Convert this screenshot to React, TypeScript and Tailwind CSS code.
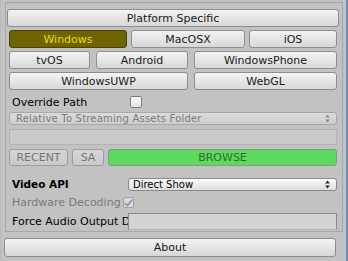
import React from "react";

// Unity-style inspector panel (light skin)
const btn =
  "flex items-center justify-center shrink-0 rounded-[3px] border border-[#8e8e8e] bg-gradient-to-b from-[#f3f3f3] to-[#d8d8d8] text-[11px] leading-none text-[#1a1a1a]";

function PopupArrows({ color }: { color: string }) {
  return (
    <svg width="5" height="9" viewBox="0 0 5 9" className="shrink-0">
      <path d="M2.5 0.5 L4.8 3.5 L0.2 3.5 Z" fill={color} />
      <path d="M2.5 8.5 L4.8 5.5 L0.2 5.5 Z" fill={color} />
    </svg>
  );
}

function PlatformRow({
  items,
  gap,
  top,
}: {
  items: { label: string; w: number; active?: boolean }[];
  gap: string;
  top: string;
}) {
  return (
    <div className={`ml-[3px] flex ${gap} ${top}`}>
      {items.map((it) =>
        it.active ? (
          <div
            key={it.label}
            style={{ width: it.w }}
            className="flex h-[18px] shrink-0 items-center justify-center rounded-[3px] border border-[#4a4400] bg-[#6d6300] text-[11px] leading-none text-[#eadc00]"
          >
            {it.label}
          </div>
        ) : (
          <div key={it.label} style={{ width: it.w }} className={`${btn} h-[18px]`}>
            {it.label}
          </div>
        ),
      )}
    </div>
  );
}

export default function App() {
  return (
    <div className="flex h-[261px] w-[348px] bg-[#c2c2c2] font-['DejaVu_Sans',sans-serif]">
      <div className="w-[1px] shrink-0 bg-[#b9b9b9]" />
      <div className="flex w-[344px] shrink-0 flex-col">
        {/* Platform box */}
        <div className="ml-[4px] mt-[2px] flex w-[338px] flex-col border border-[#a7a7a7] pb-[1px]">
          <div className={`${btn} mx-[1px] mt-[6px] h-[18px] w-[332px]`}>Platform Specific</div>

          <PlatformRow
            top="mt-[3px]"
            gap="gap-[4px]"
            items={[
              { label: "Windows", w: 118, active: true },
              { label: "MacOSX", w: 114 },
              { label: "iOS", w: 88 },
            ]}
          />
          <PlatformRow
            top="mt-[3px]"
            gap="gap-[6px]"
            items={[
              { label: "tvOS", w: 81 },
              { label: "Android", w: 92 },
              { label: "WindowsPhone", w: 143 },
            ]}
          />
          <PlatformRow
            top="mt-[3px]"
            gap="gap-[6px]"
            items={[
              { label: "WindowsUWP", w: 179 },
              { label: "WebGL", w: 143 },
            ]}
          />

          {/* Override path */}
          <div className="mt-[6px] flex h-[12px] items-center">
            <div className="w-[124px] pl-[6px] text-[11px] leading-none text-black">Override Path</div>
            <div className="h-[12px] w-[12px] rounded-[2px] border border-[#7d7d7d] bg-gradient-to-b from-[#fafafa] to-[#e2e2e2]" />
          </div>

          <div className="ml-[3px] mt-[4px] flex h-[13px] w-[328px] items-center justify-between rounded-[3px] border border-[#a9a9a9] bg-gradient-to-b from-[#dcdcdc] to-[#cdcdcd] pl-[6px] pr-[6px]">
            <span className="text-[10px] leading-none tracking-[0.2px] text-[#7c7c7c]">
              Relative To Streaming Assets Folder
            </span>
            <PopupArrows color="#8a8a8a" />
          </div>

          <div className="ml-[3px] mt-[4px] h-[16px] w-[328px] border border-[#b3b3b3] bg-[#cbcbcb]" />

          <div className="ml-[3px] mt-[4px] flex h-[17px] gap-[4px]">
            <div className="flex w-[59px] items-center justify-center rounded-[3px] border border-[#9c9c9c] bg-gradient-to-b from-[#d6d6d6] to-[#c9c9c9] text-[11px] leading-none text-[#767676]">
              RECENT
            </div>
            <div className="flex w-[32px] items-center justify-center rounded-[3px] border border-[#9c9c9c] bg-gradient-to-b from-[#d6d6d6] to-[#c9c9c9] text-[11px] leading-none text-[#767676]">
              SA
            </div>
            <div className="flex w-[229px] items-center justify-center rounded-[3px] border border-[#7fa07f] bg-[#5ed85e] text-[11px] leading-none text-[#2f7030]">
              BROWSE
            </div>
          </div>

          {/* Video API */}
          <div className="mt-[12px] flex h-[13px] items-center">
            <div className="w-[122px] pl-[6px] text-[10.5px] font-bold leading-none text-black">Video API</div>
            <div className="flex h-[13px] w-[209px] items-center justify-between rounded-[3px] border border-[#8a8a8a] bg-gradient-to-b from-[#fbfbfb] to-[#dedede] pl-[4px] pr-[6px]">
              <span className="text-[10px] leading-none text-black">Direct Show</span>
              <PopupArrows color="#222222" />
            </div>
          </div>

          <div className="mt-[6px] flex h-[11px] items-center">
            <div className="w-[117px] pl-[6px] text-[11px] leading-none text-[#7a7a7a]">Hardware Decoding</div>
            <div className="flex h-[11px] w-[11px] items-center justify-center rounded-[2px] border border-[#a2a2a2] bg-[#d9d9d9]">
              <svg width="9" height="8" viewBox="0 0 9 8">
                <path d="M1 4.2 L3.4 6.6 L8.2 0.8" fill="none" stroke="#7e9cc2" strokeWidth="1.8" />
              </svg>
            </div>
          </div>

          <div className="mt-[5px] flex h-[17px] items-center">
            <div className="w-[122px] overflow-hidden whitespace-nowrap pl-[6px] text-[11px] leading-none text-black">
              Force Audio Output Device
            </div>
            <div className="h-[17px] w-[209px] border border-[#8a8a8a] border-b-[#b5b5b5] bg-[#d3d3d3]" />
          </div>
        </div>

        {/* About */}
        <div className={`${btn} ml-[3px] mt-[6px] h-[19px] w-[332px]`}>About</div>
      </div>
      <div className="w-[1px] shrink-0 bg-[#c2c2c2]" />
      <div className="w-[2px] shrink-0 bg-[#6b8cc4]" />
    </div>
  );
}
